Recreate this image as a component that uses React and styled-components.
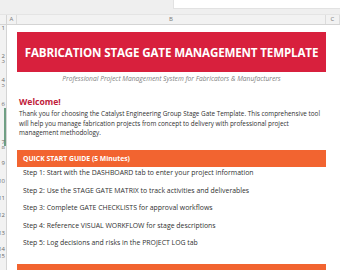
import React from 'react'
import styled, { createGlobalStyle } from 'styled-components'

const GlobalStyle = createGlobalStyle`
    html, body {
        margin: 0;
        padding: 0;
        background: #ffffff;
        overflow: hidden;
    }
    body {
        font-family: "Open Sans", "Liberation Sans", sans-serif;
    }
`

const rowHeads = [
    { n: 1, h: 7 },
    { n: 2, h: 28 },
    { n: 3, h: 4 },
    { n: 4, h: 20 },
    { n: 5, h: 4 },
    { n: 6, h: 20 },
    { n: 7, h: 38, selected: true },
    { n: 8, h: 4 },
    { n: 9, h: 17 },
    { n: 10, h: 18 },
    { n: 11, h: 17 },
    { n: 12, h: 17 },
    { n: 13, h: 18 },
    { n: 14, h: 16 },
    { n: 15, h: 6 },
    { n: 16, h: 20 },
]

const introLines = [
    'Thank you for choosing the Catalyst Engineering Group Stage Gate Template. This comprehensive tool',
    'will help you manage fabrication projects from concept to delivery with professional project',
    'management methodology.',
]

const steps = [
    'Step 1: Start with the DASHBOARD tab to enter your project information',
    'Step 2: Use the STAGE GATE MATRIX to track activities and deliverables',
    'Step 3: Complete GATE CHECKLISTS for approval workflows',
    'Step 4: Reference VISUAL WORKFLOW for stage descriptions',
    'Step 5: Log decisions and risks in the PROJECT LOG tab',
]

function App() {
    return (
        <Window>
            <GlobalStyle />
            <FormulaStrip>
                <FormulaInput />
            </FormulaStrip>
            <ColHeaders>
                <Corner />
                <ColHead $w="10px">A</ColHead>
                <ColHead $w="309px">B</ColHead>
                <ColHead $w="auto">C</ColHead>
            </ColHeaders>
            <Sheet>
                <RowHeads>
                    {rowHeads.map((r) => (
                        <RowHead key={r.n} $h={r.h} $selected={r.selected}>
                            <span>{r.n}</span>
                        </RowHead>
                    ))}
                </RowHeads>
                <Cells>
                    <Banner>FABRICATION STAGE GATE MANAGEMENT TEMPLATE</Banner>
                    <Subtitle>Professional Project Management System for Fabricators &amp; Manufacturers</Subtitle>
                    <Welcome>Welcome!</Welcome>
                    <Intro>
                        {introLines.map((l) => (
                            <div key={l}>{l}</div>
                        ))}
                    </Intro>
                    <SectionBar>QUICK START GUIDE (5 Minutes)</SectionBar>
                    {steps.map((s) => (
                        <Step key={s}>{s}</Step>
                    ))}
                    <SectionBar $next />
                </Cells>
            </Sheet>
        </Window>
    )
}

export default App

const Window = styled.div`
    width: 340px;
    height: 270px;
    overflow: hidden;
    background: #ffffff;
`

const FormulaStrip = styled.div`
    height: 14px;
    background: #efefef;
    display: flex;
    justify-content: flex-end;
    align-items: flex-start;
`

const FormulaInput = styled.div`
    width: 166px;
    height: 8px;
    background: #ffffff;
    border-bottom: 1px solid #e2e2e2;
    border-left: 1px solid #e2e2e2;
`

const ColHeaders = styled.div`
    display: flex;
    height: 11px;
    background: #f2f2f2;
    border-top: 1px solid #e4e4e4;
    border-bottom: 1px solid #d4d4d4;
    box-sizing: border-box;
`

const Corner = styled.div`
    width: 7px;
    flex: none;
    border-right: 1px solid #d4d4d4;
    box-sizing: border-box;
`

const ColHead = styled.div`
    width: ${(p) => p.$w};
    flex: ${(p) => (p.$w === 'auto' ? '1' : 'none')};
    font-size: 6px;
    color: #7a7a7a;
    line-height: 9px;
    text-align: center;
    border-right: 1px solid #dcdcdc;
    box-sizing: border-box;
`

const Sheet = styled.div`
    display: flex;
    align-items: flex-start;
`

const RowHeads = styled.div`
    width: 7px;
    flex: none;
    display: flex;
    flex-direction: column;
    background: #f2f2f2;
    border-right: 1px solid #d4d4d4;
    box-sizing: border-box;
    overflow: hidden;
`

const RowHead = styled.div`
    height: ${(p) => p.$h}px;
    overflow: hidden;
    display: flex;
    justify-content: flex-end;
    align-items: flex-end;
    font-size: 6px;
    line-height: 6px;
    color: #6a6a6a;
    white-space: nowrap;
    box-shadow: ${(p) => (p.$selected ? 'inset -2px 0 0 #6f9f84' : 'none')};

    span {
        margin-right: 1px;
        margin-bottom: ${(p) => (p.$h > 6 ? 1 : 0)}px;
    }
`

const Cells = styled.div`
    flex: none;
    width: 309px;
    margin-left: 10px;
    padding-top: 7px;
    display: flex;
    flex-direction: column;
`

const Banner = styled.div`
    height: 40px;
    background: #d8203d;
    color: #ffffff;
    font-weight: 700;
    font-size: 11.6px;
    letter-spacing: -0.15px;
    display: flex;
    align-items: center;
    justify-content: center;
    white-space: nowrap;
`

const Subtitle = styled.div`
    height: 14px;
    line-height: 14px;
    text-align: center;
    font-style: italic;
    font-size: 6.7px;
    color: #808080;
    white-space: nowrap;
`

const Welcome = styled.div`
    margin-top: 10px;
    height: 13px;
    line-height: 13px;
    padding-left: 2px;
    font-size: 8.6px;
    font-weight: 700;
    color: #c0203a;
`

const Intro = styled.div`
    padding-left: 2px;
    font-size: 6.35px;
    line-height: 9.6px;
    color: #303030;
    height: 41px;
    white-space: nowrap;
`

const SectionBar = styled.div`
    height: 17px;
    line-height: 17px;
    background: #f26430;
    color: #ffffff;
    font-weight: 700;
    font-size: 6.8px;
    padding-left: 6px;
    margin-top: ${(p) => (p.$next ? '9px' : '0')};
`

const Step = styled.div`
    height: 17.5px;
    padding-left: 6px;
    padding-top: 1px;
    box-sizing: border-box;
    font-size: 6.9px;
    line-height: 9px;
    color: #303030;
    white-space: nowrap;
`
